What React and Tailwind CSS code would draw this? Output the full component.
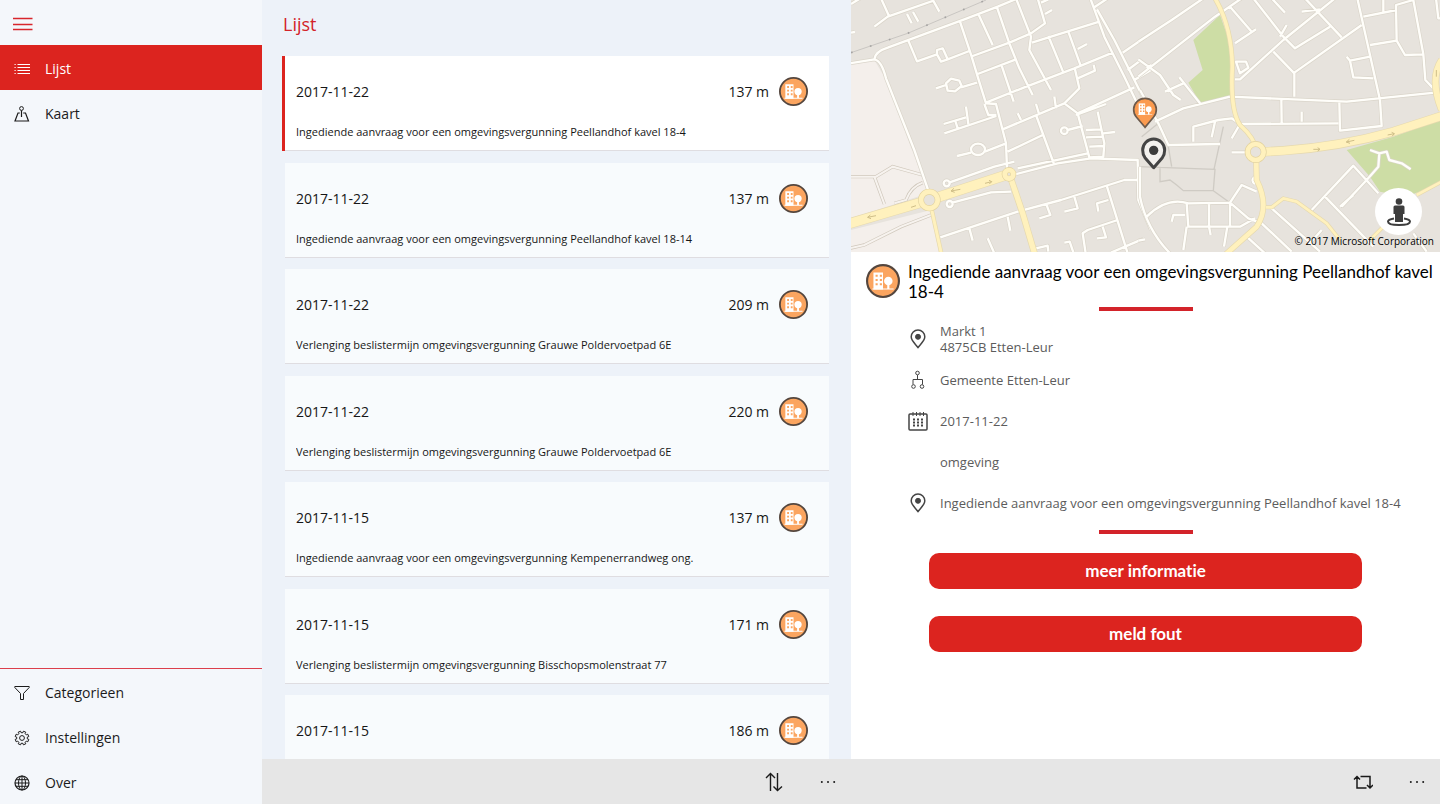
import { useState } from 'react'

const ITEMS = [
    { date: '2017-11-22', distance: '137 m', title: 'Ingediende aanvraag voor een omgevingsvergunning Peellandhof kavel 18-4' },
    { date: '2017-11-22', distance: '137 m', title: 'Ingediende aanvraag voor een omgevingsvergunning Peellandhof kavel 18-14' },
    { date: '2017-11-22', distance: '209 m', title: 'Verlenging beslistermijn omgevingsvergunning Grauwe Poldervoetpad 6E' },
    { date: '2017-11-22', distance: '220 m', title: 'Verlenging beslistermijn omgevingsvergunning Grauwe Poldervoetpad 6E' },
    { date: '2017-11-15', distance: '137 m', title: 'Ingediende aanvraag voor een omgevingsvergunning Kempenerrandweg ong.' },
    { date: '2017-11-15', distance: '171 m', title: 'Verlenging beslistermijn omgevingsvergunning Bisschopsmolenstraat 77' },
    { date: '2017-11-15', distance: '186 m', title: '' },
]

// streets west of the centre
const WEST = [
    'M-5 190L70 178Q72 155 110 143L340 58L440 20L500-5',
    'M70 178Q92 182 105 235L190 450L232 572',
    'M70 80L110 50L245 3M90-5L115 50M168 42L182 70M186 36L202 65M243-5L265 35M0 98L12 96M0 12L28-5',
    'M172 122L198 184L258 163M290 178L355 153M258 150L275 145L290 178L270 185L258 163Z',
    'M326 62L362 170L380 230L405 310L435 312L465 430L468 505',
    'M382 42L425 135M438 22L475 130L505 205L545 285M555 345L610 495',
    'M495-5L540 110L535 150L600 270M365 168L475 128L540 100L582 70L560-5M582 42L603 30M570 8L592-2',
    'M380 222L495 178M452 197L488 305M543 128L600 110L745 65',
    'M592 108L636 215M652 95L690 200M680 147L708 132',
    'M405 308L520 262L670 205L785 158M400 312L412 345L436 345',
    'M672 208L685 265L640 310L455 388M680 235L732 212L728 195M610 290L615 325M555 312L565 345',
    'M640 310L680 340L850 262M675 345L765 312',
    'M280 400L436 348M278 372L345 352M312 360L320 385M345 320L352 372',
    'M255 265L285 255M330 262L378 248M285 250L300 236L325 242L332 258L312 274L290 272Z',
    'M318 468L360 458M402 455L465 430M360 448A21 17 0 1 1 402 448A21 17 0 1 1 360 448',
    'M470 455L575 405M500 340L510 360M650 390L695 378M630 392A10 10 0 1 1 650 392A10 10 0 1 1 630 392',
    'M680 340L715 472L757 470L760 430L740 335M705 390L750 388M705 412L755 410M715 440L760 438M757 400L792 396',
    'M500 505L710 460M485 525L620 490L720 475L860 480L862 600L900 690M890 645L905 636',
    'M490 485L430 500L294 548M304 608L420 577L480 575M278 550A9 9 0 1 1 296 550A9 9 0 1 1 278 550M287 612A9 9 0 1 1 305 612A9 9 0 1 1 287 612',
    'M268 712L500 635L630 600L820 540L862 540',
    'M768 560L830 760M585 610L598 645L565 655M670 590L680 625L640 635M772 600L738 610L742 635',
    'M704 760L695 700L710 690L800 660M755 680L765 712L738 715M780 758L880 715',
    'M355 685L365 722M470 650L478 692M410 715L430 760M640 728L656 725L668 760M555 745L590 737L592 755',
    'M718-5L760 110L820 230L868 330M738 28L790 120L850 240L880 300',
    'M730 22L770-5M815 158L900 100M830 210L868 182M850 240L900 210',
]

const TRACKS = ['M-5 530L75 530L125 500L215 525', 'M70 530L100 612', 'M-5 745L40 735L150 680L240 645', 'M130 610L165 600Q180 560 215 548']

// streets east of the centre
const EAST = [
    'M-5 125L95 60L190-5M-5 230L225 50L305-5',
    'M-5 178L60 225L100 285L122 300M75 275L130 250M118 232L180 310M20 205L35 195',
    'M45 365L130 325L270 290M0 270L55 370L85 435L240 432',
    'M270 290L620 305L885 278M300 372L595 370M424 295L425 368M485 335L485 365',
    'M598 305L600 392L725 378L720 300L652-5',
    'M285 238L300 238L430 120L585-5M285 130L348 88M335 95L270 20',
    'M340-5L430 110L465 145L570 80M400 155L463 220L463 290M463 218L665 75M395-5L435 38M495-5L605 112M540 28L485 35M420 110L440 75',
    'M670 50L770 30M690 135L770 122L795 165L850 163M770 122L768 15L820 0L850 163L856 240L880 265M730-5L730 35',
    'M620 170L630 182L690 170M630 182L640 232L700 235M888-5L895 55L905 55',
    'M288 185L318 185L325 203L300 220Z',
    'M160 425L160 380L235 360L275 355L300 372L275 415M225 365L215 412M275 457L320 457',
    'M0 500L0 590Q20 690 95 765M-5 722L15 718',
    'M20 650Q80 590 145 610L270 608L325 655L365 670L455 755M140 610L145 680L300 680L345 655',
    'M270 608L270 680M207 612L207 680L212 705M95 665L100 645L135 645M140 680L130 750M262 680L252 740',
    'M270 608L305 555L350 575M345 530Q330 540 345 552',
    'M320 710L375 760M395 625L540 755M515 630L640 497L715 580M555 590L700 740M600 620L640 585M680 540L605 620M545 690L505 735',
    'M680 540L715 500L718 460L690 450M718 460L740 455L748 480L785 490L812 508M820 700L860 755',
]

const YELLOW_EAST = [
    { d: 'M225-5Q275 80 277 200Q270 330 300 375Q345 415 348 450', w: 11 },
    { d: 'M350 457L430 452Q600 440 760 395L905 348', w: 24 },
    { d: 'M348 457L350 540Q390 620 350 680L255 765', w: 14 },
    { d: 'M905 180Q868 235 905 330', w: 18 },
    { d: 'M830 585L905 545M378 622L395 622L430 595L470 605L560 670L600 720M690 720L730 680', w: 8 },
]

const YELLOW_WEST = [
    { d: 'M-10 672L235 600L475 522', w: 28 },
    { d: 'M475 522L515 640L552 765', w: 16 },
    { d: 'M240 620L272 765', w: 9 },
]

function Streets({ paths }) {
    const d = paths.join('')
    return (
        <g fill="none" strokeLinejoin="round">
            <path d={d} stroke="#dad5ca" strokeWidth="11" />
            <path d={d} stroke="#fffefa" strokeWidth="7" />
        </g>
    )
}

function MainRoads({ roads }) {
    return (
        <g fill="none" strokeLinejoin="round">
            {roads.map(r => <path key={r.d} d={r.d} stroke="#e6d9ae" strokeWidth={r.w + 4} />)}
            {roads.map(r => <path key={r.d} d={r.d} stroke="#fff1bd" strokeWidth={r.w} />)}
        </g>
    )
}

function Roundabout({ cx, cy, r }) {
    return (
        <g>
            <circle cx={cx} cy={cy} r={r} fill="#e7e3dc" stroke="#e3d3a0" strokeWidth="18" />
            <circle cx={cx} cy={cy} r={r} fill="none" stroke="#fff1bd" strokeWidth="14" />
        </g>
    )
}

function TownMap() {
    return (
        <svg viewBox="0 0 1767 756" preserveAspectRatio="xMidYMid slice" className="block w-full h-full" role="img" aria-label="Kaart van Etten-Leur">
            <rect width="1767" height="756" fill="#e7e3dd" />
            <path d="M0 190L70 180L100 230L232 580L0 655ZM0 690L240 630L270 756L0 756Z" fill="#f4efeb" />
            <g transform="translate(867)">
                <path d="M160 120L240 45L270 130L275 250L270 290L180 308L145 248L188 210ZM620 450L760 410L900 360V550L800 590L720 575L690 530Z" fill="#cddda5" />
                <path d="M-5 500L225 508L220 572L130 572L110 555L90 540L60 545V500M85 440L95 500M250 380L222 508M220 572L270 608M55 370L5 410" fill="none" stroke="#cfcbc4" strokeWidth="4" />
            </g>
            <path d="M0 158L170 100L405 0" fill="none" stroke="#c9c6c2" strokeWidth="3" />
            <path d="M0 158L170 100L405 0" fill="none" stroke="#a5a3a2" strokeWidth="5" strokeDasharray="5 55" />
            <g fill="none">
                <path d={TRACKS.join('')} stroke="#cfc7bb" strokeWidth="10" />
                <path d={TRACKS.join('')} stroke="#f7f3ef" strokeWidth="6" />
            </g>
            <Streets paths={WEST} />
            <g transform="translate(867)">
                <Streets paths={EAST} />
                <MainRoads roads={YELLOW_EAST} />
                <Roundabout cx={347} cy={456} r={24} />
            </g>
            <MainRoads roads={YELLOW_WEST} />
            <Roundabout cx={235} cy={600} r={25} />
            <Roundabout cx={474} cy={523} r={13} />
            <g fill="none" stroke="#cfbe88" strokeWidth="3">
                <path d="M50 652L75 647M58 645L50 652L60 656M180 622L195 617M300 573L328 568M309 565L300 573L311 577M402 550L422 545M414 541L422 545L415 552" />
                <path d="M1387 448L1407 448M1400 443L1407 448L1400 453M1486 426L1510 421M1495 418L1486 426L1497 430M1610 405L1630 401M1622 397L1630 401L1624 408M1756 210L1756 230" />
            </g>

            <g>
                <path d="M882 382L856 351A34 34 0 1 1 908 351Z" fill="#fb9b50" stroke="#6c5a4c" strokeWidth="5" />
                <g transform="translate(848 293) scale(2.15)">
                    <Building hole="#fb9b50" />
                </g>
            </g>
            <g>
                <path d="M908 503L882 473Q875 463 875 450A33 33 0 0 1 941 450Q941 463 934 473Z" fill="#f3f1ee" stroke="#444" strokeWidth="9" strokeLinejoin="round" />
                <circle cx="908" cy="451" r="14" fill="#3c3c3c" />
            </g>
        </svg>
    )
}

// drawn on a 32 x 32 grid
function Building({ hole }) {
    return (
        <g>
            <path d="M7 8H16V24H7Z" fill="#fff" />
            <path d="M9 10h2v2h-2zM13 10h2v2h-2zM9 14h2v2h-2zM13 14h2v2h-2zM9 18h2v2h-2zM13 18h2v2h-2z" fill={hole} />
            <circle cx="21" cy="16" r="4" fill="#fff" />
            <path d="M20 18H22V24H20ZM6 23H26V24H6Z" fill="#fff" />
        </g>
    )
}

function CategoryIcon({ className }) {
    return (
        <svg viewBox="0 0 32 32" className={className} aria-hidden="true">
            <circle cx="16" cy="16" r="15" fill="#fba560" stroke="#54463e" strokeWidth="2" />
            <Building hole="#fba560" />
        </svg>
    )
}

function Icon({ size = 'size-4', box = 16, children }) {
    return (
        <svg viewBox={`0 0 ${box} ${box}`} className={`${size} shrink-0`} fill="none" stroke="currentColor" aria-hidden="true">
            {children}
        </svg>
    )
}

const ListIcon = () => (
    <Icon><path d="M3.500 3.500H16M3.500 6.500H16M3.500 9.500H16M3.500 12.500H16M.5 3.500h1.200M.5 6.500h1.200M.5 9.500h1.200M.5 12.500h1.200" /></Icon>
)

const MapIcon = () => (
    <Icon>
        <circle cx="7.500" cy="2.500" r="1.900" />
        <path d="M7.500 4.500V11M5.800 7H4L1 15H14.500L11.500 7H9.200" strokeWidth="1.200" />
    </Icon>
)

const FilterIcon = () => (
    <Icon><path d="M.8 1.500H15.200V2.500L9.500 8.500V14.500H6.500V8.500L.8 2.500Z" /></Icon>
)

const GearIcon = () => (
    <Icon>
        <circle cx="8" cy="8" r="2.400" />
        <path d="M6.600 1.200 7.100 2.700H8.900L9.400 1.200 11.800 2.200 11.100 3.700 12.300 4.900 13.800 4.200 14.800 6.600 13.300 7.100V8.900L14.800 9.400 13.800 11.800 12.300 11.100 11.100 12.300 11.800 13.800 9.400 14.800 8.900 13.300H7.100L6.600 14.800 4.200 13.800 4.900 12.300 3.700 11.100 2.200 11.800 1.200 9.400 2.700 8.900V7.100L1.200 6.600 2.200 4.200 3.700 4.900 4.900 3.700 4.200 2.200Z" strokeLinejoin="round" />
    </Icon>
)

const GlobeIcon = () => (
    <Icon>
        <circle cx="8" cy="8" r="7" strokeWidth="1.200" />
        <ellipse cx="8" cy="8" rx="3.500" ry="7" />
        <path d="M8 1V15M1 8H15M2 4.700H14M2 11.300H14" />
    </Icon>
)

const PinIcon = () => (
    <Icon size="size-5" box={20}>
        <path d="M10 18.500C8 15.500 3.200 12 3.200 7.800A6.800 6.800 0 0 1 16.800 7.800C16.800 12 12 15.500 10 18.500Z" strokeWidth="1.500" />
        <circle cx="10" cy="7.800" r="2.500" fill="currentColor" />
    </Icon>
)

const OrgIcon = () => (
    <Icon size="size-5" box={20}>
        <circle cx="9.500" cy="3" r="1.800" />
        <circle cx="5.500" cy="16.500" r="1.800" />
        <circle cx="14" cy="16.500" r="1.800" />
        <path d="M9.500 5V9.500M5 14.500V9.500H14.500V14.500" />
    </Icon>
)

const CalendarIcon = () => (
    <Icon size="size-5" box={20}>
        <rect x="1" y="3" width="18" height="16" rx="1" strokeWidth="1.500" />
        <path d="M5 1V5M8.500 1V5M12 1V5M15.500 1V5" />
        <path d="M5 8.500H15M5 11.500H15M5 14.500H15" strokeWidth="2" strokeDasharray="2 2" />
    </Icon>
)

const MoreIcon = () => (
    <Icon>
        <g fill="currentColor" stroke="none">
            <circle cx="1.800" cy="8" r="1" />
            <circle cx="8" cy="8" r="1" />
            <circle cx="14.200" cy="8" r="1" />
        </g>
    </Icon>
)

const SortIcon = () => (
    <Icon size="size-5" box={20}>
        <path d="M6.500 19V1.500M2 6L6.500 1.500L11 6M13.500 1V18.500M9.500 14.500L13.500 18.500L18 14.500" strokeWidth="1.400" />
    </Icon>
)

const RepeatIcon = () => (
    <Icon size="size-5" box={20}>
        <path d="M4 5V16H13.500M7.500 4.500H17V15M1 7.500L4 4.500L7 7.500M14 13L17 16L20 13" strokeWidth="1.500" />
    </Icon>
)

function NavItem({ icon, label, active }) {
    return (
        <a href="#" aria-current={active ? 'page' : undefined} className={`flex items-center gap-[15px] h-[45px] pt-0.5 pl-[14px] text-sm ${active ? 'bg-[#dc241f] text-white' : 'text-[#1b1b1b]'}`}>
            {icon}
            {label}
        </a>
    )
}

function Sidebar() {
    return (
        <nav className="flex flex-col w-[262px] shrink-0 bg-[#f4f7fb]">
            <button aria-label="Menu" className="flex items-center h-[45px] pl-[13px] pt-1 text-[#d8262c]">
                <Icon size="size-5" box={20}><path d="M0 3.500H19.500M0 9.500H19.500M0 14.500H19.500" strokeWidth="1.500" /></Icon>
            </button>
            <NavItem icon={<ListIcon />} label="Lijst" active />
            <NavItem icon={<MapIcon />} label="Kaart" />
            <div className="mt-auto border-t border-[#dc3f4c]">
                <NavItem icon={<FilterIcon />} label="Categorieen" />
                <NavItem icon={<GearIcon />} label="Instellingen" />
                <NavItem icon={<GlobeIcon />} label="Over" />
            </div>
        </nav>
    )
}

function ListCard({ item, selected, onSelect }) {
    return (
        <li className="odd:mb-3 even:mb-[11px]">
            <button
                onClick={onSelect}
                className={`flex flex-col w-full h-[95px] pt-5 pl-[11px] pr-[21px] text-left text-[#161616] border-l-[3px] bg-clip-padding shadow-[inset_0_-1px_0_#dfdde1] ${selected ? 'bg-white border-l-[#dc241f]' : 'bg-[#f8fbfd] border-l-transparent'}`}
            >
                <span className="flex items-center w-full h-[31px] text-sm">
                    {item.date}
                    <span className="ml-auto mr-[10px]">{item.distance}</span>
                    <CategoryIcon className="size-[29px]" />
                </span>
                {item.title && <span className="w-full mt-[17px] text-[11px] leading-4 truncate">{item.title}</span>}
            </button>
        </li>
    )
}

function CommandBar({ label, icon }) {
    return (
        <div className="flex justify-end h-[45px] shrink-0 bg-[#e6e6e6] text-[#1a1a1a]">
            <button aria-label={label} className="flex items-center justify-center w-[62px]">{icon}</button>
            <button aria-label="Meer" className="flex items-center justify-center w-[46px]"><MoreIcon /></button>
        </div>
    )
}

function InfoRow({ icon, children }) {
    return (
        <div className="flex items-center gap-3 min-h-[41px]">
            <span className="size-5 shrink-0 text-[#444]">{icon}</span>
            <span>{children}</span>
        </div>
    )
}

function Divider() {
    return <hr className="w-[94px] h-1 mx-auto border-0 bg-[#d3232a]" />
}

function ActionButton({ children }) {
    return (
        <button className="h-9 rounded-[10px] bg-[#dc241f] text-white font-['Lato',sans-serif] font-bold text-[17px] [font-variant-ligatures:none]">
            {children}
        </button>
    )
}

function Detail({ item }) {
    return (
        <section className="flex flex-col flex-1 min-w-0 bg-white">
            <div className="relative h-[252px] shrink-0">
                <TownMap />
                <button aria-label="Streetside" className="absolute right-[18px] bottom-[17px] flex items-center justify-center size-[47px] rounded-full bg-white">
                    <svg viewBox="0 0 28 32" className="w-7 h-8" fill="#3d3d3d" aria-hidden="true">
                        <circle cx="14" cy="5.500" r="3.300" />
                        <path d="M10 9.500H18Q19.500 9.500 19.500 11V18H18V26H10V18H8.500V11Q8.500 9.500 10 9.500Z" />
                        <path d="M9 22.500Q3 23.500 3 25.500C3 28 8 29 14 29S25 28 25 25.500Q25 23.500 19 22.500" fill="none" stroke="#3d3d3d" strokeWidth="2" />
                    </svg>
                </button>
                <span className="absolute right-[6px] bottom-[3px] text-[10px] leading-4 text-black">© 2017 Microsoft Corporation</span>
            </div>

            <div className="flex flex-col flex-1 min-h-0 overflow-hidden">
                <header className="flex items-start gap-2 pt-[10px] pl-[15px] pr-1">
                    <CategoryIcon className="size-[34px] mt-[2px] shrink-0" />
                    <h2 className="font-['Lato',sans-serif] text-[17px] leading-5 text-black">{item.title}</h2>
                </header>
                <div className="pt-[5px]"><Divider /></div>
                <div className="pt-[7px] pl-[57px] text-[13px] leading-4 text-[#5c5c5c]">
                    <InfoRow icon={<PinIcon />}>Markt 1<br />4875CB Etten-Leur</InfoRow>
                    <InfoRow icon={<OrgIcon />}>Gemeente Etten-Leur</InfoRow>
                    <InfoRow icon={<CalendarIcon />}>{item.date}</InfoRow>
                    <InfoRow>omgeving</InfoRow>
                    <InfoRow icon={<PinIcon />}>{item.title}</InfoRow>
                </div>
                <div className="pt-[7px]"><Divider /></div>
                <div className="flex flex-col gap-[27px] px-[78px] pt-[19px]">
                    <ActionButton>meer informatie</ActionButton>
                    <ActionButton>meld fout</ActionButton>
                </div>
            </div>
            <CommandBar label="Vernieuwen" icon={<RepeatIcon />} />
        </section>
    )
}

export default function App() {
    const [selected, setSelected] = useState(0)

    return (
        <div className="flex h-screen overflow-hidden font-['Open_Sans','Noto_Sans',sans-serif]">
            <Sidebar />
            <main className="flex flex-col flex-1 min-w-0 bg-[#edf2f9]">
                <h1 className="flex items-center h-14 pb-2 pl-[21px] shrink-0 text-lg text-[#d3232a]">Lijst</h1>
                <ul className="flex-1 min-h-0 overflow-hidden pl-5 pr-[22px]">
                    {ITEMS.map((item, i) => (
                        <ListCard key={i} item={item} selected={i === selected} onSelect={() => setSelected(i)} />
                    ))}
                </ul>
                <CommandBar label="Sorteren" icon={<SortIcon />} />
            </main>
            <Detail item={ITEMS[selected]} />
        </div>
    )
}
